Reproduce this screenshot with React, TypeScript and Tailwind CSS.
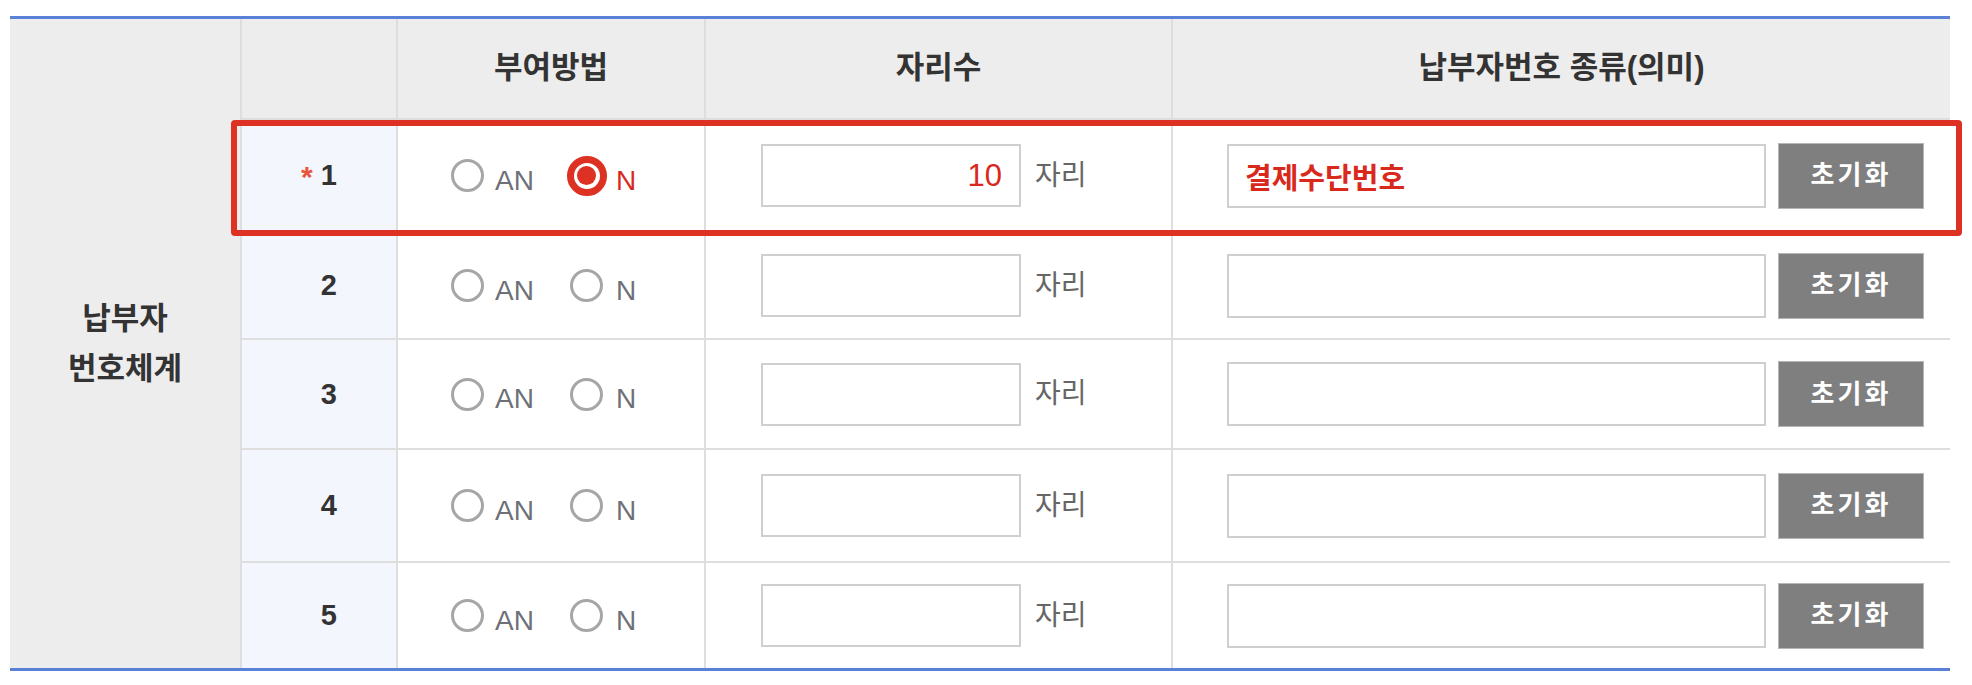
import React from 'react';

interface DigitRow {
  no: number;
  height: string;
  required?: boolean;
  method?: 'AN' | 'N';
  digits?: string;
  meaning?: string;
}

const rows: DigitRow[] = [
  { no: 1, height: 'h-[113px]', required: true, method: 'N', digits: '10', meaning: '결제수단번호' },
  { no: 2, height: 'h-[107px]' },
  { no: 3, height: 'h-[110px]' },
  { no: 4, height: 'h-[113px]' },
  { no: 5, height: 'h-[105px]' },
];

const RED = 'text-[#d9291d]';

function Radio({ checked }: { checked: boolean }) {
  return (
    <span className="flex h-[40px] w-[40px] shrink-0 items-center justify-center">
      {checked ? (
        <span className="flex h-[40px] w-[40px] items-center justify-center rounded-full border-[7px] border-[#dc3123]">
          <span className="h-[19px] w-[19px] rounded-full bg-[#dc3123]" />
        </span>
      ) : (
        <span className="h-[33px] w-[33px] rounded-full border-[3px] border-[#a6a6a6]" />
      )}
    </span>
  );
}

function MethodOptions({ value }: { value?: 'AN' | 'N' }) {
  const label = (v: 'AN' | 'N') =>
    value === v ? RED : 'text-[#6e7078]';
  return (
    <div className="flex items-center pl-[49px]">
      <Radio checked={value === 'AN'} />
      <span className={`ml-[8px] pt-[10px] text-[28px] leading-none ${label('AN')}`}>AN</span>
      <span className="ml-[33px]">
        <Radio checked={value === 'N'} />
      </span>
      <span className={`ml-[9px] pt-[10px] text-[28px] leading-none ${label('N')}`}>N</span>
    </div>
  );
}

export default function App() {
  return (
    <div className="relative min-h-[685px] bg-white pt-[16px] pl-[10px] font-['Liberation_Sans','Noto_Sans_CJK_KR',sans-serif]">
      <div className="flex w-[1940px] border-y-[3px] border-[#5b80d8]">
        {/* 좌측 구분 */}
        <div className="flex w-[232px] shrink-0 items-center justify-center border-r-2 border-[#dedede] bg-[#ededed]">
          <div className="text-center text-[31px] font-bold leading-[50px] text-[#333]">
            납부자
            <br />
            번호체계
          </div>
        </div>

        <div className="flex flex-1 flex-col">
          {/* header */}
          <div className="flex h-[101px] border-b-2 border-[#dedede] bg-[#ededed] text-[31px] font-bold text-[#333]">
            <div className="w-[156px] shrink-0 border-r-2 border-[#dedede]" />
            <div className="flex w-[308px] shrink-0 items-center justify-center border-r-2 border-[#dedede]">부여방법</div>
            <div className="flex w-[467px] shrink-0 items-center justify-center border-r-2 border-[#dedede]">자리수</div>
            <div className="flex flex-1 items-center justify-center">납부자번호 종류(의미)</div>
          </div>

          {rows.map((row, i) => (
            <div
              key={row.no}
              className={`flex ${row.height} ${i < rows.length - 1 ? 'border-b-2 border-[#dedede]' : ''}`}
            >
              <div className="flex w-[156px] shrink-0 items-center justify-center border-r-2 border-[#dedede] bg-[#f3f6fc]">
                <span className={`mr-[8px] pt-[2px] text-[30px] font-bold leading-none ${row.required ? 'text-[#e8553a]' : 'invisible'}`}>*</span>
                <span className="text-[29px] font-bold leading-none text-[#333]">{row.no}</span>
              </div>

              <div className="flex w-[308px] shrink-0 items-center border-r-2 border-[#dedede]">
                <MethodOptions value={row.method} />
              </div>

              <div className="flex w-[467px] shrink-0 items-center border-r-2 border-[#dedede] pl-[55px]">
                <input
                  readOnly
                  value={row.digits ?? ''}
                  className={`h-[63px] w-[260px] border-2 border-[#cfcfcf] bg-white pr-[17px] text-right text-[31px] outline-none ${RED}`}
                />
                <span className="ml-[14px] text-[28px] leading-none text-[#666]">자리</span>
              </div>

              <div className="flex flex-1 items-center pl-[54px]">
                <input
                  readOnly
                  value={row.meaning ?? ''}
                  className={`h-[64px] w-[539px] border-2 border-[#cfcfcf] bg-white pl-[16px] text-[29px] font-bold outline-none ${RED}`}
                />
                <button className="ml-[12px] h-[66px] w-[146px] border border-[#b5b5b5] bg-[#7f7f7f] text-[26px] font-bold tracking-[3px] text-white">
                  초기화
                </button>
              </div>
            </div>
          ))}
        </div>
      </div>

      {/* 강조 박스 */}
      <div className="pointer-events-none absolute left-[231px] top-[120px] h-[116px] w-[1731px] rounded-[4px] border-[6px] border-[#dc3123]" />
    </div>
  );
}
